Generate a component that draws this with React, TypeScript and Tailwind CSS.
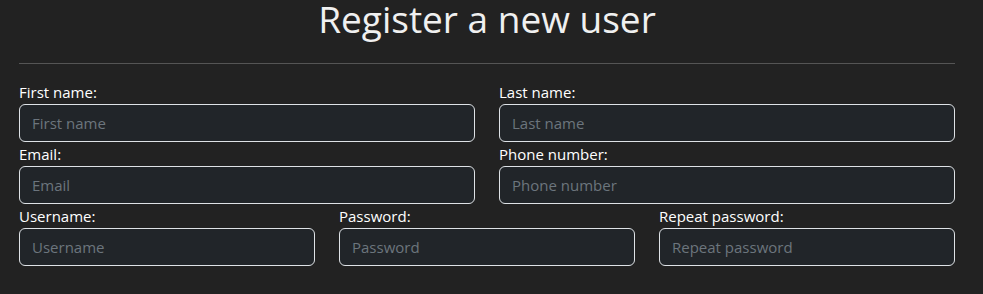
import React from 'react';

type Field = { id: string; label: string; type?: string };

const rows: Field[][] = [
  [
    { id: 'firstName', label: 'First name' },
    { id: 'lastName', label: 'Last name' },
  ],
  [
    { id: 'email', label: 'Email', type: 'email' },
    { id: 'phone', label: 'Phone number', type: 'tel' },
  ],
  [
    { id: 'username', label: 'Username' },
    { id: 'password', label: 'Password', type: 'password' },
    { id: 'repeatPassword', label: 'Repeat password', type: 'password' },
  ],
];

function FormField({ id, label, type = 'text' }: Field) {
  return (
    <div className="flex flex-col">
      <label htmlFor={id} className="text-[15px] leading-[24px] text-white">
        {label}:
      </label>
      <input
        id={id}
        type={type}
        placeholder={label}
        className="h-[38px] w-full rounded-[6px] border border-[#dee2e6] bg-[#212529] px-3 text-[15px] text-[#dee2e6] outline-none placeholder:text-[#6c757d]"
      />
    </div>
  );
}

export default function App() {
  return (
    <div
      className="min-h-[294px] w-full overflow-hidden bg-[#222222] text-white"
      style={{ fontFamily: '"Open Sans", "Noto Sans", sans-serif' }}
    >
      <div className="w-[955px] pl-[19px]">
        <h1 className="text-center text-[37px] font-normal leading-[37px] text-[#f0f0f0]">
          Register a new user
        </h1>
        <hr className="mt-[26px] border-t border-[#555555]" />
        <form className="mt-[16px] flex flex-col">
          {rows.map((row, i) => (
            <div
              key={i}
              className={row.length === 3 ? 'grid grid-cols-3 gap-x-6' : 'grid grid-cols-2 gap-x-6'}
            >
              {row.map((f) => (
                <FormField key={f.id} {...f} />
              ))}
            </div>
          ))}
        </form>
      </div>
    </div>
  );
}
